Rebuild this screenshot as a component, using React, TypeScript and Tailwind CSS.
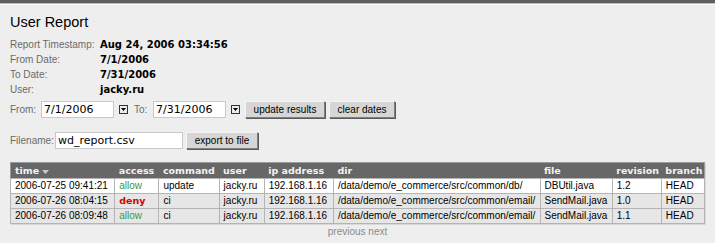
import React from "react";

const sans = "font-['Liberation_Sans',Arial,sans-serif]";
const verdana = "font-['DejaVu_Sans',Verdana,sans-serif]";

interface LogRow {
  time: string;
  access: "allow" | "deny";
  command: string;
  user: string;
  ip: string;
  dir: string;
  file: string;
  revision: string;
  branch: string;
}

const rows: LogRow[] = [
  {
    time: "2006-07-25 09:41:21",
    access: "allow",
    command: "update",
    user: "jacky.ru",
    ip: "192.168.1.16",
    dir: "/data/demo/e_commerce/src/common/db/",
    file: "DBUtil.java",
    revision: "1.2",
    branch: "HEAD",
  },
  {
    time: "2006-07-26 08:04:15",
    access: "deny",
    command: "ci",
    user: "jacky.ru",
    ip: "192.168.1.16",
    dir: "/data/demo/e_commerce/src/common/email/",
    file: "SendMail.java",
    revision: "1.0",
    branch: "HEAD",
  },
  {
    time: "2006-07-26 08:09:48",
    access: "allow",
    command: "ci",
    user: "jacky.ru",
    ip: "192.168.1.16",
    dir: "/data/demo/e_commerce/src/common/email/",
    file: "SendMail.java",
    revision: "1.1",
    branch: "HEAD",
  },
];

const info = [
  ["Report Timestamp:", "Aug 24, 2006 03:34:56"],
  ["From Date:", "7/1/2006"],
  ["To Date:", "7/31/2006"],
  ["User:", "jacky.ru"],
];

function DropButton() {
  return (
    <span className="flex h-[9px] w-[9px] items-center justify-center border border-[#333] bg-[#ececec]">
      <svg width="5" height="3" viewBox="0 0 5 3">
        <path d="M0 0h5L2.5 3z" fill="#000" />
      </svg>
    </span>
  );
}

function Button({ children, width }: { children: React.ReactNode; width: string }) {
  return (
    <button
      className={`${width} h-[17px] border border-t-[#f4f4f4] border-l-[#f4f4f4] border-b-[#808080] border-r-[#808080] bg-[#d6d6d6] text-[10px] leading-none text-black shadow-[1px_1px_0_#5a5a5a]`}
    >
      {children}
    </button>
  );
}

const inputCls = `${verdana} h-[17px] border border-[#c8c8c8] bg-white px-[2px] pt-0 pb-[1px] text-[11px] leading-normal text-black outline-none`;

const headers = ["time", "access", "command", "user", "ip address", "dir", "file", "revision", "branch"];
const widths = ["w-[104px]", "w-[44px]", "w-[60px]", "w-[45px]", "w-[69px]", "w-[206px]", "w-[72px]", "w-[49px]", "w-[43px]"];

export default function App() {
  return (
    <div className={`min-h-[243px] w-[715px] bg-[#eeeeee] ${sans}`}>
      <div className="h-[3px] bg-[#5e5e5e]" />
      <div className="h-px bg-[#bdbdbd]" />
      <div className="h-px bg-[#fafafa]" />

      <div className="pl-[10px] pt-[8px]">
        <h1 className="text-[14.5px] leading-[18px] text-black">User Report</h1>

        {/* report info */}
        <div className="mt-[6px]">
          {info.map(([label, value]) => (
            <div key={label} className="flex h-[15px] items-center">
              <span className="w-[90px] text-[10px] text-[#6a6a6a]">{label}</span>
              <span className={`${verdana} text-[10px] font-bold text-black`}>{value}</span>
            </div>
          ))}
        </div>

        {/* date filter */}
        <div className="mt-[4px] flex h-[17px] items-center text-[10px] text-[#6a6a6a]">
          <span className="w-[31px]">From:</span>
          <input defaultValue="7/1/2006" className={`${inputCls} w-[73px]`} />
          <span className="ml-[5px]">
            <DropButton />
          </span>
          <span className="ml-[6px] w-[19px]">To:</span>
          <input defaultValue="7/31/2006" className={`${inputCls} w-[73px]`} />
          <span className="ml-[5px]">
            <DropButton />
          </span>
          <span className="ml-[5px]">
            <Button width="w-[80px]">update results</Button>
          </span>
          <span className="ml-[4px]">
            <Button width="w-[66px]">clear dates</Button>
          </span>
        </div>

        {/* export */}
        <div className="mt-[14px] flex h-[17px] items-center text-[10px] text-[#6a6a6a]">
          <span className="w-[45px]">Filename:</span>
          <input defaultValue="wd_report.csv" className={`${inputCls} w-[128px]`} />
          <span className="ml-[3px]">
            <Button width="w-[72px]">export to file</Button>
          </span>
        </div>

        {/* log table */}
        <table className="mt-[13px] w-[695px] table-fixed border-collapse border border-[#9a9a9a] text-[10px] shadow-[1px_1px_0_#d8d8d8]">
          <colgroup>
            {widths.map((w, i) => (
              <col key={i} className={w} />
            ))}
          </colgroup>
          <thead>
            <tr className="h-[15px] bg-[#676767]">
              {headers.map((h) => (
                <th
                  key={h}
                  className={`${verdana} px-[4px] py-0 text-left text-[9.5px] font-bold leading-[15px] text-[#f2f2f2]`}
                >
                  {h}
                  {h === "time" && (
                    <svg width="7" height="4" viewBox="0 0 7 4" className="ml-[3px] inline-block align-middle">
                      <path d="M0 0h7L3.5 4z" fill="#c8c8c8" />
                    </svg>
                  )}
                </th>
              ))}
            </tr>
          </thead>
          <tbody>
            {rows.map((r, i) => (
              <tr key={r.time} className={`h-[15px] ${i === 0 ? "bg-white" : "bg-[#e6e6e6]"}`}>
                {[r.time, r.access, r.command, r.user, r.ip, r.dir, r.file, r.revision, r.branch].map((v, j) => (
                  <td
                    key={j}
                    className={`truncate border border-[#b4b4b4] px-[4px] py-0 leading-[14px] ${
                      j === 1
                        ? r.access === "deny"
                          ? `${verdana} text-[9.5px] font-bold text-[#d40000]`
                          : "text-[#3a9a3a]"
                        : "text-black"
                    }`}
                  >
                    {v}
                  </td>
                ))}
              </tr>
            ))}
          </tbody>
        </table>

        <div className="w-[695px] text-center text-[10px] leading-[15px] text-[#8a8a8a]">
          previous next
        </div>
      </div>
    </div>
  );
}
